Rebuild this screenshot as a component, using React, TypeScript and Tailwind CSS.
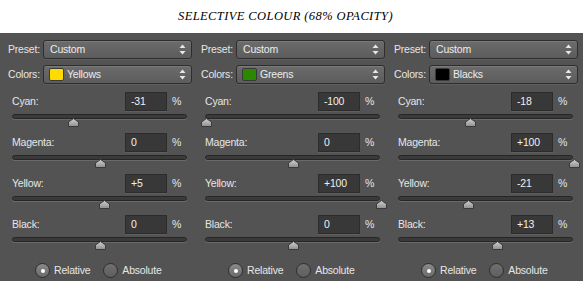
import React from "react";

type Col = {
  color: string;
  name: string;
  values: [number, number, number, number];
};

const cols: Col[] = [
  { color: "#ffdc00", name: "Yellows", values: [-31, 0, 5, 0] },
  { color: "#2b8800", name: "Greens", values: [-100, 0, 100, 0] },
  { color: "#000000", name: "Blacks", values: [-18, 100, -21, 13] },
];

const labels = ["Cyan:", "Magenta:", "Yellow:", "Black:"];

const fmt = (v: number) => (v > 0 ? `+${v}` : `${v}`);

function Arrows() {
  return (
    <svg width="7" height="11" viewBox="0 0 7 11" className="shrink-0">
      <path d="M3.5 0.5 L6.5 4 L0.5 4 Z" fill="#e8e8e8" />
      <path d="M3.5 10.5 L6.5 7 L0.5 7 Z" fill="#e8e8e8" />
    </svg>
  );
}

function Select({ children }: { children: React.ReactNode }) {
  return (
    <div className="w-[149px] h-[19px] rounded-[3px] border border-[#2e2e2e] bg-gradient-to-b from-[#6c6c6c] to-[#5c5c5c] shadow-[inset_0_1px_0_#7a7a7a,0_1px_0_#5e5e5e] flex items-center pl-[6px] pr-[5px] text-[#ececec]">
      <div className="flex-1 flex items-center gap-[3px] min-w-0">{children}</div>
      <Arrows />
    </div>
  );
}

function Slider({ label, value }: { label: string; value: number }) {
  const pos = ((value + 100) / 200) * 175;
  return (
    <div className="flex flex-col">
      <div className="flex items-center h-[19px]">
        <div className="w-[125px] pl-[12px] text-[#e6e6e6]">{label}</div>
        <div className="w-[42px] h-[19px] bg-[#383838] border border-[#2c2c2c] shadow-[0_1px_0_#5e5e5e] flex items-center pl-[5px] text-[#f0f0f0]">
          {fmt(value)}
        </div>
        <div className="ml-[5px] text-[#e6e6e6]">%</div>
      </div>
      <div className="relative ml-[12px] mt-[3px] w-[175px] h-[5px] rounded-[3px] bg-[#3a3a3a] border border-[#262626] shadow-[0_1px_0_#6a6a6a]">
        <svg
          width="11"
          height="9"
          viewBox="0 0 11 9"
          className="absolute top-[3px]"
          style={{ left: pos - 5.5 }}
        >
          <defs>
            <linearGradient id="tg" x1="0" y1="0" x2="0" y2="1">
              <stop offset="0" stopColor="#d2d2d2" />
              <stop offset="1" stopColor="#8e8e8e" />
            </linearGradient>
          </defs>
          <path d="M5.5 0.5 L10.5 4 L10.5 8.5 L0.5 8.5 L0.5 4 Z" fill="url(#tg)" stroke="#3a3a3a" strokeWidth="1" />
        </svg>
      </div>
    </div>
  );
}

function Radio({ checked, label }: { checked: boolean; label: string }) {
  return (
    <div className="flex items-center gap-[4px]">
      <div
        className={
          checked
            ? "w-[15px] h-[15px] rounded-full border border-[#2e2e2e] bg-gradient-to-b from-[#8a8a8a] to-[#6a6a6a] flex items-center justify-center"
            : "w-[15px] h-[15px] rounded-full border border-[#2e2e2e] bg-gradient-to-b from-[#707070] to-[#5e5e5e]"
        }
      >
        {checked && <div className="w-[4px] h-[4px] rounded-full bg-white" />}
      </div>
      <span className="text-[#e6e6e6]">{label}</span>
    </div>
  );
}

function Column({ col }: { col: Col }) {
  return (
    <div className="w-[193px] shrink-0 flex flex-col pt-[7px]">
      <div className="flex items-center h-[19px]">
        <div className="w-[43px] pl-[8px] text-[#e6e6e6]">Preset:</div>
        <Select>
          <span>Custom</span>
        </Select>
      </div>
      <div className="flex items-center h-[19px] mt-[6px]">
        <div className="w-[43px] pl-[8px] text-[#e6e6e6]">Colors:</div>
        <Select>
          <span
            className="w-[15px] h-[13px] rounded-[2px] border border-[#3a3a3a] -ml-[1px]"
            style={{ background: col.color }}
          />
          <span>{col.name}</span>
        </Select>
      </div>
      <div className="flex flex-col gap-[14px] mt-[8px]">
        {labels.map((l, i) => (
          <Slider key={l} label={l} value={col.values[i]} />
        ))}
      </div>
      <div className="flex items-center mt-[21px] pl-[35px] gap-[13px]">
        <Radio checked label="Relative" />
        <Radio checked={false} label="Absolute" />
      </div>
    </div>
  );
}

export default function App() {
  return (
    <div
      className="w-[583px] h-[281px] overflow-hidden flex flex-col text-[10.5px] leading-none tracking-[-0.2px]"
      style={{ fontFamily: '"Liberation Sans", Arial, sans-serif' }}
    >
      <div className="h-[33px] bg-white flex items-center justify-center">
        <span
          className="italic text-[12.5px] tracking-[0.4px] text-black ml-[-12px]"
          style={{ fontFamily: '"Liberation Serif", "Times New Roman", serif' }}
        >
          SELECTIVE COLOUR (68% OPACITY)
        </span>
      </div>
      <div className="flex-1 bg-[#535353] flex">
        {cols.map((c) => (
          <Column key={c.name} col={c} />
        ))}
      </div>
    </div>
  );
}
